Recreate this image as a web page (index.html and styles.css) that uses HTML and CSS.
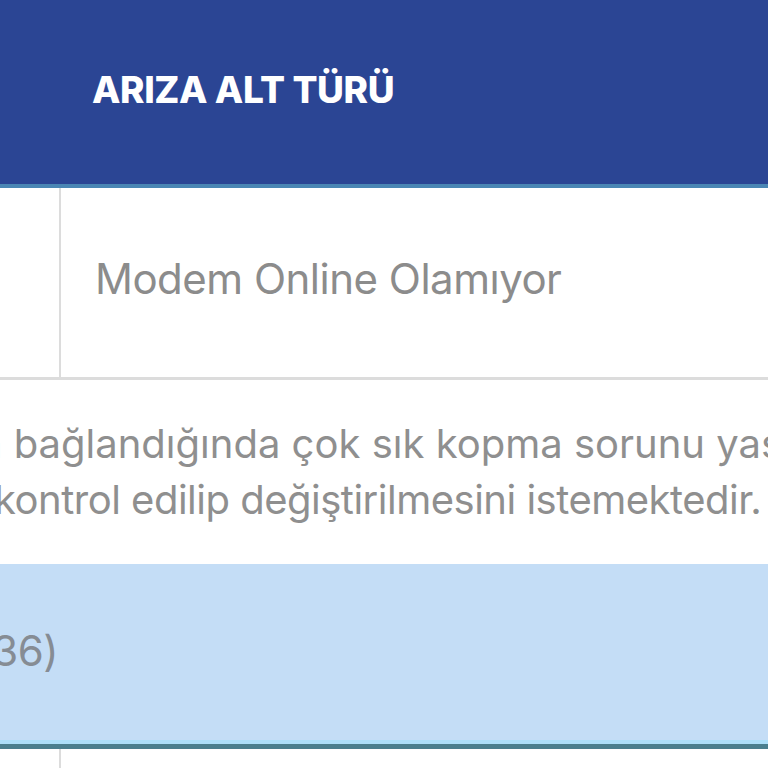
FILE: index.html
```html
<!DOCTYPE html>
<html lang="tr">
<head>
  <meta charset="UTF-8" />
  <meta name="viewport" content="width=device-width, initial-scale=1.0" />
  <title>Arıza Kayıtları</title>
  <link rel="stylesheet" href="styles.css">
</head>
<body>
  <div class="table-container">
    <table class="ariza-table">
      <colgroup>
        <col class="col-tur">
        <col class="col-alt">
      </colgroup>
      <thead>
        <tr>
          <th></th>
          <th>Arıza Alt Türü</th>
        </tr>
      </thead>
      <tbody>
        <tr class="row-ariza">
          <td class="cell-tur"></td>
          <td>Modem Online Olamıyor</td>
        </tr>
        <tr class="row-aciklama">
          <td colspan="2">
            <div class="line line-1">a bağlandığında çok sık kopma sorunu yaşadığını</div>
            <div class="line line-2">kontrol edilip değiştirilmesini istemektedir.</div>
          </td>
        </tr>
        <tr class="row-kayit">
          <td class="cell-no">(10036)</td>
          <td></td>
        </tr>
        <tr class="row-next">
          <td class="cell-tur"></td>
          <td></td>
        </tr>
      </tbody>
    </table>
  </div>
</body>
</html>
```

FILE: styles.css
```css
body {
  margin: 0;
  background: #fff;
  font-family: Inter, "Open Sans", sans-serif;
  overflow: hidden;
}

.table-container {
  width: 768px;
  height: 768px;
  overflow: hidden;
}

.ariza-table {
  border-collapse: collapse;
  table-layout: fixed;
  width: 1000px;
  margin-left: -140px;
}

.col-tur {
  width: 200px;
}

.col-alt {
  width: 800px;
}

.ariza-table th {
  height: 178px;
  padding: 0 0 6px 32px;
  background: #2b4594;
  border-bottom: 4px solid #4a86b4;
  color: #fff;
  font-size: 37px;
  font-weight: 800;
  letter-spacing: -0.4px;
  text-transform: uppercase;
  text-align: left;
}

.ariza-table td {
  padding: 0 0 8px 34px;
  color: #8c8c8c;
  font-size: 42px;
  letter-spacing: -0.5px;
  text-align: left;
  white-space: nowrap;
}

.row-ariza td {
  height: 181px;
  border-bottom: 3px solid #dcdcdc;
}

.cell-tur {
  border-right: 2px solid #dcdcdc;
}

.row-aciklama td {
  height: 184px;
  padding: 0;
}

.line {
  line-height: 56px;
  font-size: 40px;
  letter-spacing: -0.5px;
  color: #8f8f8f;
}

.line-1 {
  margin-left: 120px;
  letter-spacing: 0;
}

.line-2 {
  margin-left: 134px;
}

.row-kayit td {
  height: 172px;
  background: #c4ddf6;
  border-bottom: 5px solid #4b7f8e;
  box-shadow: inset 0 -4px 0 #addff9;
}

.row-kayit .cell-no {
  padding: 0 2px 8px 0;
  text-align: right;
  color: #868c94;
}

.row-next td {
  height: 40px;
}
```
